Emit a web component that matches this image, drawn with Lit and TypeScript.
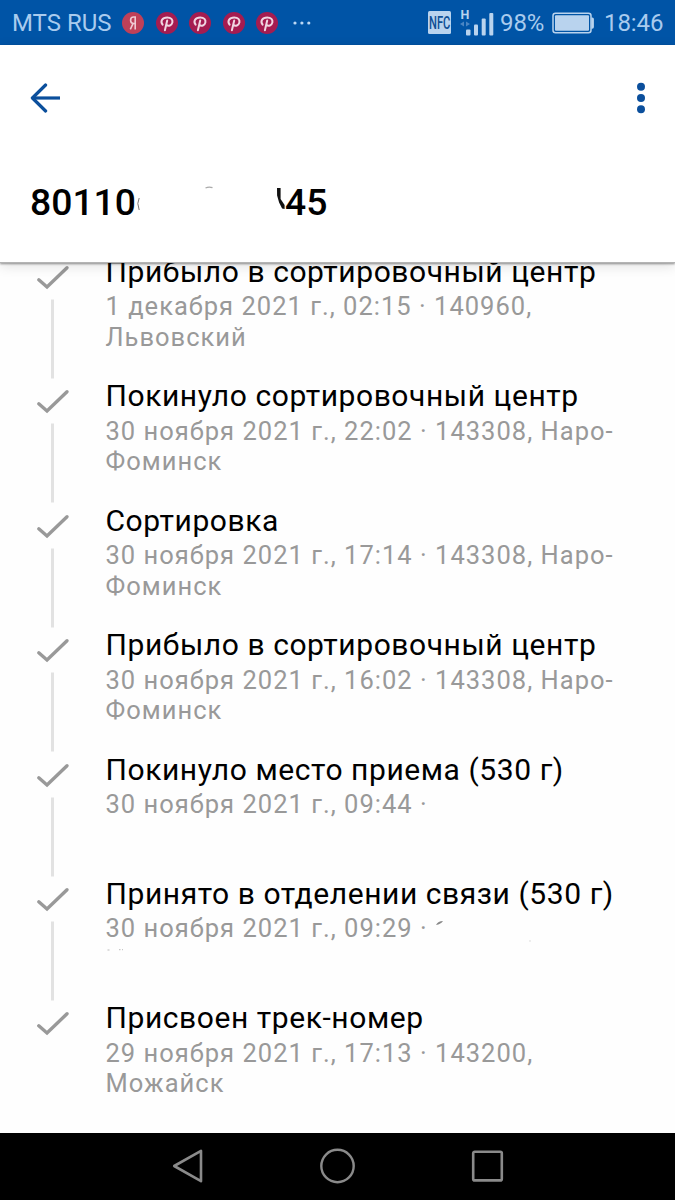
import { LitElement, html, css, svg } from "lit";
import { customElement, property } from "lit/decorators.js";

interface Step {
  title: string;
  detail: string;
  erased?: boolean;
}

const STEPS: Step[] = [
  { title: "Прибыло в сортировочный центр", detail: "1 декабря 2021 г., 02:15 · 140960, Львовский" },
  { title: "Покинуло сортировочный центр", detail: "30 ноября 2021 г., 22:02 · 143308, Наро-Фоминск" },
  { title: "Сортировка", detail: "30 ноября 2021 г., 17:14 · 143308, Наро-Фоминск" },
  { title: "Прибыло в сортировочный центр", detail: "30 ноября 2021 г., 16:02 · 143308, Наро-Фоминск" },
  { title: "Покинуло место приема (530 г)", detail: "30 ноября 2021 г., 09:44 ·" },
  { title: "Принято в отделении связи (530 г)", detail: "30 ноября 2021 г., 09:29 ·", erased: true },
  { title: "Присвоен трек-номер", detail: "29 ноября 2021 г., 17:13 · 143200, Можайск" },
];

@customElement("status-bar")
class StatusBar extends LitElement {
  static styles = css`
    :host { display: flex; align-items: center; height: 45px; background: #0054a6; color: #a9cbee;
      padding: 0 12px; box-sizing: border-box; font-size: 24px; white-space: nowrap; flex: none; }
    .carrier { width: 110px; letter-spacing: 0; }
    .badges { display: flex; gap: 11.6px; }
    .badge { display: block; width: 22px; height: 22px; }
    .more { margin-left: 15px; }
    .spacer { flex: 1; }
    .nfc { margin-right: 9px; }
    .signal { margin-right: 6px; overflow: visible; }
    .percent { width: 52px; letter-spacing: -0.1px; }
    .battery { margin-right: 10px; }
    .clock { width: 59px; letter-spacing: -0.1px; }
    svg { display: block; }
  `;

  private pin() {
    return html`<svg class="badge" viewBox="0 0 22 22">
      <circle cx="11" cy="11" r="11" fill="#a51c50" />
      <path d="M6.6 12.6C4 9.2 6.2 5.4 11.2 5.4c3.9 0 5.7 2.4 5.2 5-.6 3.1-4.1 4.4-6 2.4M11.2 8.4 8.9 18.2"
        fill="none" stroke="#f0d6e2" stroke-width="2" stroke-linecap="round" />
    </svg>`;
  }

  render() {
    return html`
      <span class="carrier">MTS RUS</span>
      <div class="badges">
        <svg class="badge" viewBox="0 0 22 22">
          <circle cx="11" cy="11" r="11" fill="#bf4058" />
          <path d="M13.2 17.4V5h-1.6c-4 0-4 6.5 0 6.5h1.6M11 11.6 8.3 17.4" fill="none" stroke="#efc9d3" stroke-width="1.6" />
        </svg>
        ${[0, 1, 2, 3].map(() => this.pin())}
      </div>
      <svg class="more" width="18" height="4" viewBox="0 0 18 4" fill="#bcd8f4">
        <circle cx="2" cy="2" r="1.6" /><circle cx="8.9" cy="2" r="1.6" /><circle cx="15.8" cy="2" r="1.6" />
      </svg>
      <span class="spacer"></span>
      <svg class="nfc" width="23" height="23" viewBox="0 0 23 23">
        <rect width="23" height="23" rx="1.5" fill="#b9d3ee" />
        <text transform="translate(1 17.9) scale(0.62 1)" font-size="18" font-weight="500" font-family="Roboto"
          fill="#0f4f95">NFC</text>
      </svg>
      <svg class="signal" width="34" height="28" viewBox="0 0 34 28" fill="#b9d3ee">
        <text x="0.5" y="9.5" font-size="12.5" font-weight="700" font-family="Roboto">H</text>
        <path d="M4 12.5v5L0 15zM6 12.5v5l4-2.5z" fill="#4b86c4" />
        <rect x="6" y="20.5" width="4.5" height="6" rx="1" />
        <rect x="14" y="15.5" width="4" height="11" rx="1" />
        <rect x="21.7" y="9.5" width="4" height="17" rx="1" />
        <rect x="29.3" y="4" width="4" height="22.5" rx="1" />
      </svg>
      <span class="percent">98%</span>
      <svg class="battery" width="42" height="22" viewBox="0 0 42 22">
        <rect x="1" y="1.2" width="38" height="19.6" rx="2.5" fill="none" stroke="#b9d3ee" stroke-width="1.5" />
        <rect x="3" y="3.2" width="34" height="15.6" rx="1" fill="#b9d3ee" />
        <path d="M39.3 5.5h1a1.6 1.6 0 0 1 1.6 1.6v8a1.6 1.6 0 0 1-1.6 1.6h-1z" fill="#b9d3ee" />
      </svg>
      <span class="clock">18:46</span>
    `;
  }
}

@customElement("track-header")
class TrackHeader extends LitElement {
  static styles = css`
    :host { display: flex; flex-direction: column; height: 218px; flex: none; background: #fff; box-sizing: border-box;
      position: relative; z-index: 1; border-bottom: 1px solid #b4b4b4;
      box-shadow: 0 1px 2px rgba(0, 0, 0, 0.4), 0 3px 12px rgba(0, 0, 0, 0.12); }
    .bar { display: flex; justify-content: space-between; align-items: center; height: 105px; padding: 0 29px 0 30px; }
    .number { display: flex; align-items: center; height: 104px; padding-left: 30px; font-size: 37.3px; font-weight: 500;
      color: #000; line-height: 44px; }
    .head { width: 105px; }
    svg { display: block; }
  `;
  render() {
    return html`
      <div class="bar">
        <svg width="31" height="30" viewBox="0 0 31 30" fill="none" stroke="#0b4f9c" stroke-width="3.2">
          <path d="M30 15H3" /><path d="M15.6 2 2.4 15l13.2 13" stroke-linecap="round" stroke-linejoin="round" />
        </svg>
        <svg width="10" height="32" viewBox="0 0 10 32" fill="#0b4f9c">
          <circle cx="5" cy="4.7" r="4" /><circle cx="5" cy="16" r="4" /><circle cx="5" cy="27.3" r="4" />
        </svg>
      </div>
      <div class="number">
        <span class="head">80110</span>
        <svg width="150" height="44" viewBox="0 0 150 44">
          <path d="M4.2 18q-2.8 5 0 12" fill="none" stroke="#777" stroke-width="1" />
          <path d="M70.5 8q3.5-1.7 7-.3" fill="none" stroke="#aaa" stroke-width="1.3" />
          <path d="M142 8h3.6v11l4 6v4l-2.5-.5-3-6-2-7z" fill="#111" />
        </svg>
        <span>45</span>
      </div>
    `;
  }
}

@customElement("track-step")
class TrackStep extends LitElement {
  @property({ attribute: false }) step!: Step;
  @property({ type: Boolean }) last = false;

  static styles = css`
    :host { display: flex; height: 124.4px; flex: none; }
    .rail { width: 105.5px; flex: none; }
    .rail svg { display: block; }
    .body { width: 540px; }
    .title { font-size: 30px; line-height: 36px; padding-bottom: 1.4px; letter-spacing: 0.57px; color: #000;
      white-space: nowrap; }
    .detail { font-size: 25.5px; line-height: 30.7px; letter-spacing: 1.02px; color: #999; }
    .flecks { display: block; }
  `;
  render() {
    return html`
      <div class="rail">
        <svg width="105" height="125" viewBox="0 0 105 125">
          <path d="M38.8 25.8 47 33 67 13.8" fill="none" stroke="#999" stroke-width="3.4" stroke-linecap="round" />
          ${this.last ? "" : svg`<rect x="51" y="45.5" width="3" height="79" fill="#e2e2e2" />`}
        </svg>
      </div>
      <div class="body">
        <div class="title">${this.step.title}</div>
        <div class="detail">${this.step.detail}
          ${this.step.erased
            ? html`<svg class="flecks" width="440" height="10" viewBox="0 30 440 10" overflow="visible">
                <path d="M330 11q5-1 7-4-5 0-7 4z" fill="#888" />
                <path d="M1.5 36h2M13 35.7h1.5M16 35.7h1" stroke="#bbb" />
                <path d="M423 27h2" stroke="#ddd" />
              </svg>`
            : ""}
        </div>
      </div>
    `;
  }
}

@customElement("nav-bar")
class NavBar extends LitElement {
  static styles = css`
    :host { display: flex; justify-content: center; align-items: center; gap: 115px; height: 67.5px; flex: none;
      background: #000; position: relative; z-index: 1; }
    svg { display: block; }
  `;
  render() {
    return html`
      <svg width="35" height="36" viewBox="0 0 35 36" fill="none" stroke="#8a8a8a" stroke-width="2.6" stroke-linejoin="round">
        <path d="M4.2 18 31 2.8v30.4z" />
      </svg>
      <svg width="35" height="36" viewBox="0 0 35 36" fill="none" stroke="#8a8a8a" stroke-width="2.4">
        <circle cx="17.5" cy="18" r="16.2" />
      </svg>
      <svg width="35" height="36" viewBox="0 0 35 36" fill="none" stroke="#8a8a8a" stroke-width="2.6">
        <rect x="3.2" y="3.8" width="28.6" height="28.6" rx="1.5" />
      </svg>
    `;
  }
}

@customElement("app-root")
class AppRoot extends LitElement {
  static styles = css`
    :host { display: flex; flex-direction: column; width: 675px; height: 1200px; overflow: hidden; background: #fefefe;
      font-family: Roboto, "Noto Sans", sans-serif; }
    .list { flex: 1; min-height: 0; overflow: hidden; }
    .scroll { display: flex; flex-direction: column; margin-top: -9px; }
  `;
  render() {
    return html`
      <status-bar></status-bar>
      <track-header></track-header>
      <div class="list">
        <div class="scroll">
          ${STEPS.map((s, i) => html`<track-step .step=${s} ?last=${i === STEPS.length - 1}></track-step>`)}
        </div>
      </div>
      <nav-bar></nav-bar>
    `;
  }
}
